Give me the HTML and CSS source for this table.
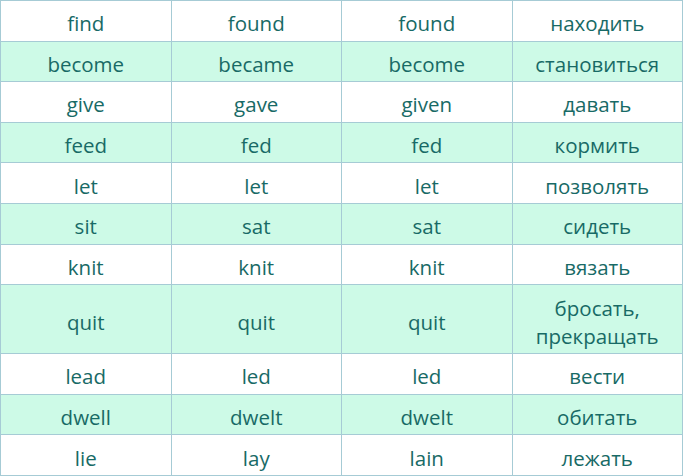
FILE: index.html
```html
<!DOCTYPE html>
<html lang="ru">
<head>
<meta charset="utf-8">
<title>Irregular verbs</title>
<link rel="stylesheet" href="styles.css">
</head>
<body>
<table class="verbs">
  <tbody>
    <tr><td>find</td><td>found</td><td>found</td><td>находить</td></tr>
    <tr class="alt"><td>become</td><td>became</td><td>become</td><td>становиться</td></tr>
    <tr><td>give</td><td>gave</td><td>given</td><td>давать</td></tr>
    <tr class="alt"><td>feed</td><td>fed</td><td>fed</td><td>кормить</td></tr>
    <tr><td>let</td><td>let</td><td>let</td><td>позволять</td></tr>
    <tr class="alt"><td>sit</td><td>sat</td><td>sat</td><td>сидеть</td></tr>
    <tr><td>knit</td><td>knit</td><td>knit</td><td>вязать</td></tr>
    <tr class="alt tall"><td>quit</td><td>quit</td><td>quit</td><td>бросать,<br>прекращать</td></tr>
    <tr><td>lead</td><td>led</td><td>led</td><td>вести</td></tr>
    <tr class="alt"><td>dwell</td><td>dwelt</td><td>dwelt</td><td>обитать</td></tr>
    <tr><td>lie</td><td>lay</td><td>lain</td><td>лежать</td></tr>
  </tbody>
</table>
</body>
</html>
```

FILE: styles.css
```css
html, body {
  margin: 0;
  padding: 0;
  background: #ffffff;
}

.verbs {
  width: 683px;
  border-collapse: collapse;
  table-layout: fixed;
  font-family: "Open Sans", "Noto Sans", sans-serif;
  font-size: 20.5px;
  color: #186a66;
}

.verbs tr {
  height: 40.6px;
}

.verbs tr.tall {
  height: 69px;
}

.verbs tr.alt {
  background: #cdfae7;
}

.verbs td {
  border: 1px solid #a6cbd5;
  text-align: center;
  vertical-align: middle;
  padding: 5px 4px 0;
  line-height: 28px;
}
```
